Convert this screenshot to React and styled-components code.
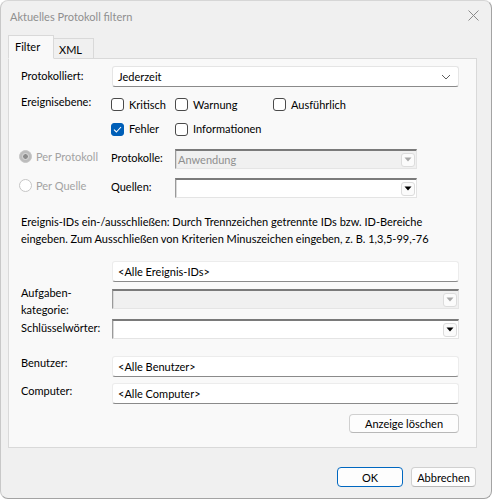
import React from 'react';
import styled, { createGlobalStyle } from 'styled-components';

const GlobalStyle = createGlobalStyle`
  html, body {
    margin:0;
    padding:0;
    background:#ffffff;
  }
  body {
    font-family:"Segoe UI", Lato, "Noto Sans", sans-serif;
    font-size:11px;
    color:#000;
  }
`;

const Chevron = () => (
  <svg width="10" height="6" viewBox="0 0 10 6">
    <path d="M1 1 L5 5 L9 1" fill="none" stroke="#5f5f5f" strokeWidth="1" />
  </svg>
);

const Triangle = ({ disabled }) => (
  <svg width="8" height="5" viewBox="0 0 8 5">
    <path d="M0.5 0.5 H7.5 L4 4.5 Z" fill={disabled ? '#a8a8a8' : '#000'} />
  </svg>
);

const Checkbox = ({ checked, label }) => (
  <CheckLabel>
    <CheckBox checked={checked}>
      {checked && (
        <svg width="9" height="7" viewBox="0 0 9 7">
          <path d="M1 3.6 L3.4 6 L8 1" fill="none" stroke="#fff" strokeWidth="1.1" />
        </svg>
      )}
    </CheckBox>
    {label}
  </CheckLabel>
);

const Radio = ({ checked, label }) => (
  <RadioLabel>
    <RadioCircle checked={checked}>{checked && <RadioDot />}</RadioCircle>
    {label}
  </RadioLabel>
);

const OldCombo = ({ value, disabled, width }) => (
  <ClassicCombo disabled={disabled} width={width}>
    <span>{value}</span>
    <ArrowButton>
      <Triangle disabled={disabled} />
    </ArrowButton>
  </ClassicCombo>
);

export default function App() {
  return (
    <>
      <GlobalStyle />
      <Window>
        <TitleBar>
          <Title>Aktuelles Protokoll filtern</Title>
          <CloseButton>
            <svg width="11" height="11" viewBox="0 0 11 11">
              <path d="M0.5 0.5 L10.5 10.5 M10.5 0.5 L0.5 10.5" stroke="#8a8a8a" strokeWidth="1" />
            </svg>
          </CloseButton>
        </TitleBar>

        <Tabs>
          <Tab active>Filter</Tab>
          <Tab>XML</Tab>
        </Tabs>

        <Panel>
          <Row>
            <FieldLabel offset={-1}>Protokolliert:</FieldLabel>
            <ModernSelect>
              <span>Jederzeit</span>
              <Chevron />
            </ModernSelect>
          </Row>

          <CheckRow mt={9}>
            <FieldLabel offset={-3}>Ereignisebene:</FieldLabel>
            <Checkbox label="Kritisch" />
            <Checkbox label="Warnung" />
            <Checkbox label="Ausführlich" />
          </CheckRow>

          <CheckRow mt={9}>
            <span />
            <Checkbox checked label="Fehler" />
            <Checkbox label="Informationen" />
          </CheckRow>

          <SourceRow mt={12}>
            <Radio checked label="Per Protokoll" />
            <FieldLabel offset={-2}>Protokolle:</FieldLabel>
            <OldCombo value="Anwendung" disabled />
          </SourceRow>

          <SourceRow mt={9}>
            <Radio label="Per Quelle" />
            <FieldLabel offset={-2}>Quellen:</FieldLabel>
            <OldCombo value="" />
          </SourceRow>

          <Description>
            Ereignis-IDs ein-/ausschließen: Durch Trennzeichen getrennte IDs bzw. ID-Bereiche
            eingeben. Zum Ausschließen von Kriterien Minuszeichen eingeben, z. B. 1,3,5-99,-76
          </Description>

          <Row mt={14}>
            <span />
            <TextInput>&lt;Alle Ereignis-IDs&gt;</TextInput>
          </Row>

          <Row mt={2} top>
            <FieldLabel>Aufgaben-<br />kategorie:</FieldLabel>
            <ComboSlot>
              <OldCombo value="" disabled width="100%" />
            </ComboSlot>
          </Row>

          <Row mt={1}>
            <FieldLabel offset={-2}>Schlüsselwörter:</FieldLabel>
            <OldCombo value="" width="100%" />
          </Row>

          <Row mt={17}>
            <FieldLabel offset={-4}>Benutzer:</FieldLabel>
            <TextInput>&lt;Alle Benutzer&gt;</TextInput>
          </Row>

          <Row mt={6}>
            <FieldLabel offset={-3}>Computer:</FieldLabel>
            <TextInput>&lt;Alle Computer&gt;</TextInput>
          </Row>

          <ClearRow>
            <Button width={110} height={19}>Anzeige löschen</Button>
          </ClearRow>
        </Panel>

        <Footer>
          <Button primary width={66}>OK</Button>
          <Button width={65}>Abbrechen</Button>
        </Footer>
      </Window>
    </>
  );
}

const Window = styled.div`
  box-sizing:border-box;
  width:492px;
  height:499px;
  background:#f0f0f0;
  border:1px solid #a3a3a3;
  border-top-color:#d6d6d6;
  border-left-color:#c8c8c8;
  border-radius:8px;
  display:flex;
  flex-flow:column nowrap;
  overflow:hidden;
`;

const TitleBar = styled.div`
  height:29px;
  display:flex;
  align-items:center;
  justify-content:space-between;
  padding:0 9px 0 9px;
  font-size:11px;
`;

const Title = styled.div`
  color:#8f8f8f;
  margin-top:1px;
`;

const CloseButton = styled.div`
  width:12px;
  height:12px;
  display:flex;
  align-items:center;
  justify-content:center;
  margin-right:3px;
`;

const Tabs = styled.div`
  display:flex;
  align-items:flex-end;
  padding-left:7px;
  margin-top:5px;
  height:23px;
  position:relative;
  z-index:1;
`;

const Tab = styled.div`
  box-sizing:border-box;
  height:${p => (p.active ? '24px' : '21px')};
  width:${p => (p.active ? '46px' : '40px')};
  padding:${p => (p.active ? '4px 0 0 6px' : '4px 0 0 5px')};
  background:${p => (p.active ? '#f9f9f9' : '#f0f0f0')};
  border:1px solid #d9d9d9;
  border-bottom:${p => (p.active ? '1px solid #f9f9f9' : '1px solid #d9d9d9')};
  border-left:${p => (p.active ? '1px solid #d9d9d9' : 'none')};
  margin-bottom:-1px;
  color:#000;
`;

const Panel = styled.div`
  box-sizing:border-box;
  margin-left:7px;
  width:469px;
  height:390px;
  background:#f9f9f9;
  border:1px solid #d9d9d9;
  padding:7px 17px 0 12px;
  display:flex;
  flex-flow:column nowrap;
`;

const Row = styled.div`
  display:grid;
  grid-template-columns:91px 1fr;
  align-items:${p => (p.top ? 'start' : 'center')};
  margin-top:${p => p.mt || 0}px;
`;

const CheckRow = styled.div`
  display:grid;
  grid-template-columns:90px 64px 98px 1fr;
  align-items:center;
  height:16px;
  margin-top:${p => p.mt || 0}px;
`;

const SourceRow = styled.div`
  display:grid;
  grid-template-columns:90px 64px 242px;
  align-items:center;
  margin-top:${p => p.mt || 0}px;
`;

const FieldLabel = styled.div`
  line-height:17px;
  position:relative;
  top:${p => p.offset || 0}px;
`;

const ModernSelect = styled.div`
  box-sizing:border-box;
  height:21px;
  background:#fff;
  border:1px solid #e5e5e5;
  border-bottom-color:#8a8a8a;
  border-radius:3px;
  display:flex;
  align-items:center;
  justify-content:space-between;
  padding:0 7px 0 5px;
`;

const TextInput = styled.div`
  box-sizing:border-box;
  height:21px;
  background:#fff;
  border:1px solid #ececec;
  border-bottom-color:#8a8a8a;
  border-radius:3px;
  display:flex;
  align-items:center;
  padding:0 5px;
`;

const ClassicCombo = styled.div`
  box-sizing:border-box;
  width:${p => p.width || '242px'};
  height:20px;
  background:${p => (p.disabled ? '#f0f0f0' : '#fff')};
  color:${p => (p.disabled ? '#8f8f8f' : '#000')};
  border-top:2px solid #7a7a7a;
  border-left:1px solid #9a9a9a;
  border-right:1px solid #e4e4e4;
  border-bottom:1px solid #e4e4e4;
  box-shadow:inset 1px 0 0 #dadada;
  display:flex;
  align-items:center;
  justify-content:space-between;
  padding:0 1px 0 2px;
`;

const ArrowButton = styled.div`
  box-sizing:border-box;
  width:14px;
  height:14px;
  border:1px solid #dcdcdc;
  border-radius:3px;
  background:#fbfbfb;
  display:flex;
  align-items:center;
  justify-content:center;
`;

const ComboSlot = styled.div`
  padding-top:5px;
`;

const CheckLabel = styled.label`
  display:flex;
  align-items:center;
  gap:5px;
  line-height:16px;
  white-space:nowrap;
`;

const CheckBox = styled.span`
  box-sizing:border-box;
  width:13px;
  height:13px;
  border-radius:3px;
  border:1px solid ${p => (p.checked ? '#005fb8' : '#4a4a4a')};
  background:${p => (p.checked ? '#005fb8' : '#fff')};
  display:flex;
  align-items:center;
  justify-content:center;
`;

const RadioLabel = styled.label`
  display:flex;
  align-items:center;
  gap:4px;
  color:#a3a3a3;
  position:relative;
  top:-3px;
  margin-left:-2px;
  white-space:nowrap;
`;

const RadioCircle = styled.span`
  box-sizing:border-box;
  width:13px;
  height:13px;
  border-radius:50%;
  border:1px solid #c6c6c6;
  background:${p => (p.checked ? '#bcbcbc' : '#fff')};
  display:flex;
  align-items:center;
  justify-content:center;
`;

const RadioDot = styled.span`
  width:5px;
  height:5px;
  border-radius:50%;
  background:#8c8c8c;
  border:1px solid #e0e0e0;
`;

const Description = styled.p`
  margin:15px 0 0 0;
  line-height:17px;
  width:440px;
`;

const ClearRow = styled.div`
  display:flex;
  justify-content:flex-end;
  margin-top:10px;
`;

const Button = styled.div`
  box-sizing:border-box;
  width:${p => p.width}px;
  height:${p => p.height || 20}px;
  background:#fdfdfd;
  border:1px solid ${p => (p.primary ? '#0067c0' : '#d0d0d0')};
  border-bottom-color:${p => (p.primary ? '#0067c0' : '#b8b8b8')};
  border-radius:4px;
  display:flex;
  align-items:center;
  justify-content:center;
`;

const Footer = styled.div`
  display:flex;
  justify-content:flex-end;
  gap:8px;
  padding:19px 15px 0 0;
`;
